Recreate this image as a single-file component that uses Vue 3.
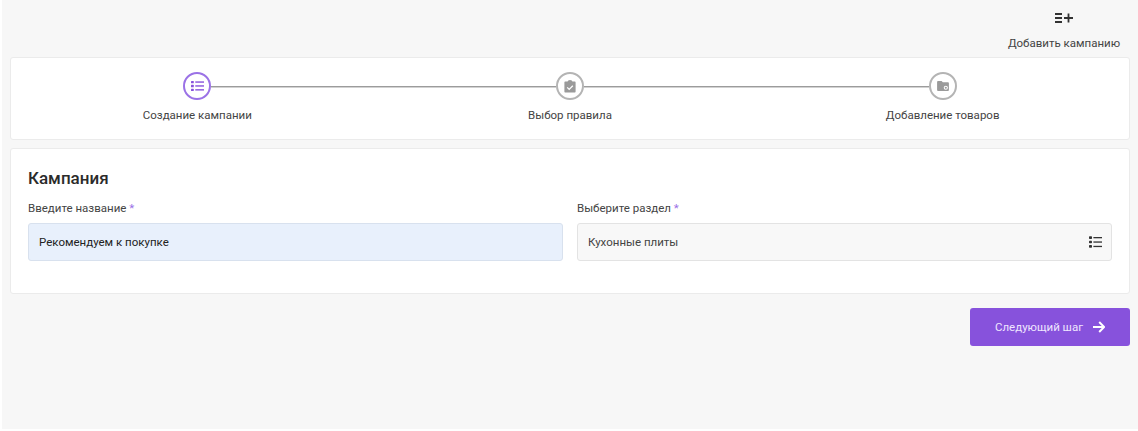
<template>
  <div class="page">
    <div class="top">
      <button class="add">
        <svg class="add-icon" width="18" height="10" viewBox="0 0 18 10" fill="none" stroke="#333" stroke-width="1.8">
          <path d="M0 1h7M0 5h7M0 9h7M9 5h9M13.5 .5v9" />
        </svg>
        <span>Добавить кампанию</span>
      </button>
    </div>

    <section class="card steps">
      <div v-for="(s, i) in steps" :key="s.label" class="step">
        <div class="track">
          <span class="line" :class="{ hidden: i === 0 }"></span>
          <span class="circle" :class="{ active: i === 0 }">
            <svg v-if="i === 0" width="13" height="12" viewBox="0 0 14 12" fill="#8752dc">
              <rect x="0" y="0.5" width="3" height="2.6" rx=".6" />
              <rect x="0" y="4.7" width="3" height="2.6" rx=".6" />
              <rect x="0" y="8.9" width="3" height="2.6" rx=".6" />
              <rect x="4.6" y="1" width="9.4" height="1.5" />
              <rect x="4.6" y="5.2" width="9.4" height="1.5" />
              <rect x="4.6" y="9.4" width="9.4" height="1.5" />
            </svg>
            <svg v-else-if="i === 1" width="12" height="13" viewBox="0 0 12 13">
              <path fill="#9a9a9a" d="M1.4 1.6h2.2a2.4 1.6 0 0 1 4.8 0h2.2c.6 0 1 .4 1 1v9c0 .6-.4 1-1 1H1.4c-.6 0-1-.4-1-1v-9c0-.6.4-1 1-1z" />
              <path fill="none" stroke="#fff" stroke-width="1.3" d="M3.2 7.4l2 2 3.6-3.6" />
            </svg>
            <svg v-else width="12" height="10" viewBox="0 0 13 11">
              <path fill="#9a9a9a" d="M1 0h4l1.3 1.5H12c.6 0 1 .4 1 1V10c0 .6-.4 1-1 1H1c-.6 0-1-.4-1-1V1c0-.6.4-1 1-1z" />
              <circle cx="9.6" cy="7.4" r="2.3" fill="#fff" />
              <circle cx="9.6" cy="7.4" r="1.2" fill="#9a9a9a" />
            </svg>
          </span>
          <span class="line" :class="{ hidden: i === steps.length - 1 }"></span>
        </div>
        <div class="step-label">{{ s.label }}</div>
      </div>
    </section>

    <section class="card form">
      <h2 class="title">Кампания</h2>
      <div class="fields">
        <div class="field">
          <label class="label">Введите название <i>*</i></label>
          <div class="input filled">Рекомендуем к покупке</div>
        </div>
        <div class="field">
          <label class="label">Выберите раздел <i>*</i></label>
          <div class="input select">
            <span>Кухонные плиты</span>
            <svg width="13" height="12" viewBox="0 0 13 12" fill="#333">
              <rect x="0" y="0.3" width="3" height="2.6" rx=".7" />
              <rect x="0" y="4.7" width="3" height="2.6" rx=".7" />
              <rect x="0" y="9.1" width="3" height="2.6" rx=".7" />
              <rect x="4.4" y="1" width="8.6" height="1.3" />
              <rect x="4.4" y="5.4" width="8.6" height="1.3" />
              <rect x="4.4" y="9.8" width="8.6" height="1.3" />
            </svg>
          </div>
        </div>
      </div>
    </section>

    <div class="actions">
      <button class="next">
        <span>Следующий шаг</span>
        <svg width="12" height="12" viewBox="0 0 12 12" fill="none" stroke="#fff" stroke-width="2">
          <path d="M0 6h11M6.2 1l5 5-5 5" />
        </svg>
      </button>
    </div>
  </div>
</template>

<script setup>
const steps = [
  { label: 'Создание кампании' },
  { label: 'Выбор правила' },
  { label: 'Добавление товаров' },
]
</script>

<style>
html, body { margin: 0; background: #fff; }
</style>

<style scoped>
.page {
  box-sizing: border-box;
  width: 1136px;
  height: 429px;
  margin-left: 2px;
  padding: 0 8px;
  background: #f7f7f7;
  font-family: Roboto, "Liberation Sans", sans-serif;
  color: #333;
  font-size: 11.5px;
}
.top {
  display: flex;
  justify-content: flex-end;
  height: 57px;
  padding-right: 4px;
}
.add {
  display: flex;
  flex-direction: column;
  align-items: center;
  width: 124px;
  padding: 13px 0 0;
  border: 0;
  background: none;
  font: inherit;
  color: #444;
}
.add-icon { display: block; margin-bottom: 13px; }
.add span { line-height: 14px; }
.card {
  box-sizing: border-box;
  background: #fff;
  border: 1px solid #ebebeb;
  border-radius: 3px;
}
.steps {
  display: grid;
  grid-template-columns: repeat(3, 1fr);
  height: 83px;
  padding-top: 14px;
  margin-bottom: 8px;
}
.step {
  display: flex;
  flex-direction: column;
  align-items: center;
}
.track {
  display: flex;
  align-items: center;
  width: 100%;
}
.line {
  flex: 1;
  height: 1px;
  background: #9c9c9c;
  box-shadow: 0 1px 0 #d2d2d2;
}
.line.hidden {
  background: transparent;
  box-shadow: none;
}
.circle {
  box-sizing: border-box;
  flex: none;
  display: flex;
  align-items: center;
  justify-content: center;
  width: 28px;
  height: 28px;
  border: 2px solid #b4b4b4;
  border-radius: 50%;
}
.circle.active { border-color: #9b72e6; }
.step-label {
  margin-top: 7px;
  line-height: 16px;
  color: #444;
}
.form {
  height: 146px;
  padding: 18px 17px 0;
}
.title {
  margin: 0;
  font-size: 17px;
  font-weight: 500;
  line-height: 22px;
  color: #2b2b2b;
}
.fields {
  display: grid;
  grid-template-columns: 535px 535px;
  column-gap: 14px;
  margin-top: 11px;
}
.label {
  display: block;
  line-height: 16px;
  margin-bottom: 7px;
  color: #444;
}
.label i {
  font-style: normal;
  color: #9a6fe6;
}
.input {
  box-sizing: border-box;
  display: flex;
  align-items: center;
  justify-content: space-between;
  height: 38px;
  padding: 0 9px 0 10px;
  border: 1px solid #e3e3e3;
  border-radius: 3px;
  background: #f8f8f8;
  color: #444;
}
.input.filled {
  background: #e8f0fc;
  border-color: #d8e1ee;
  color: #222;
}
.actions {
  display: flex;
  justify-content: flex-end;
  margin-top: 14px;
}
.next {
  display: flex;
  align-items: center;
  justify-content: center;
  gap: 10px;
  width: 160px;
  height: 38px;
  border: 0;
  border-radius: 3px;
  background: #8752dc;
  color: #efe6ff;
  font: inherit;
}
</style>
